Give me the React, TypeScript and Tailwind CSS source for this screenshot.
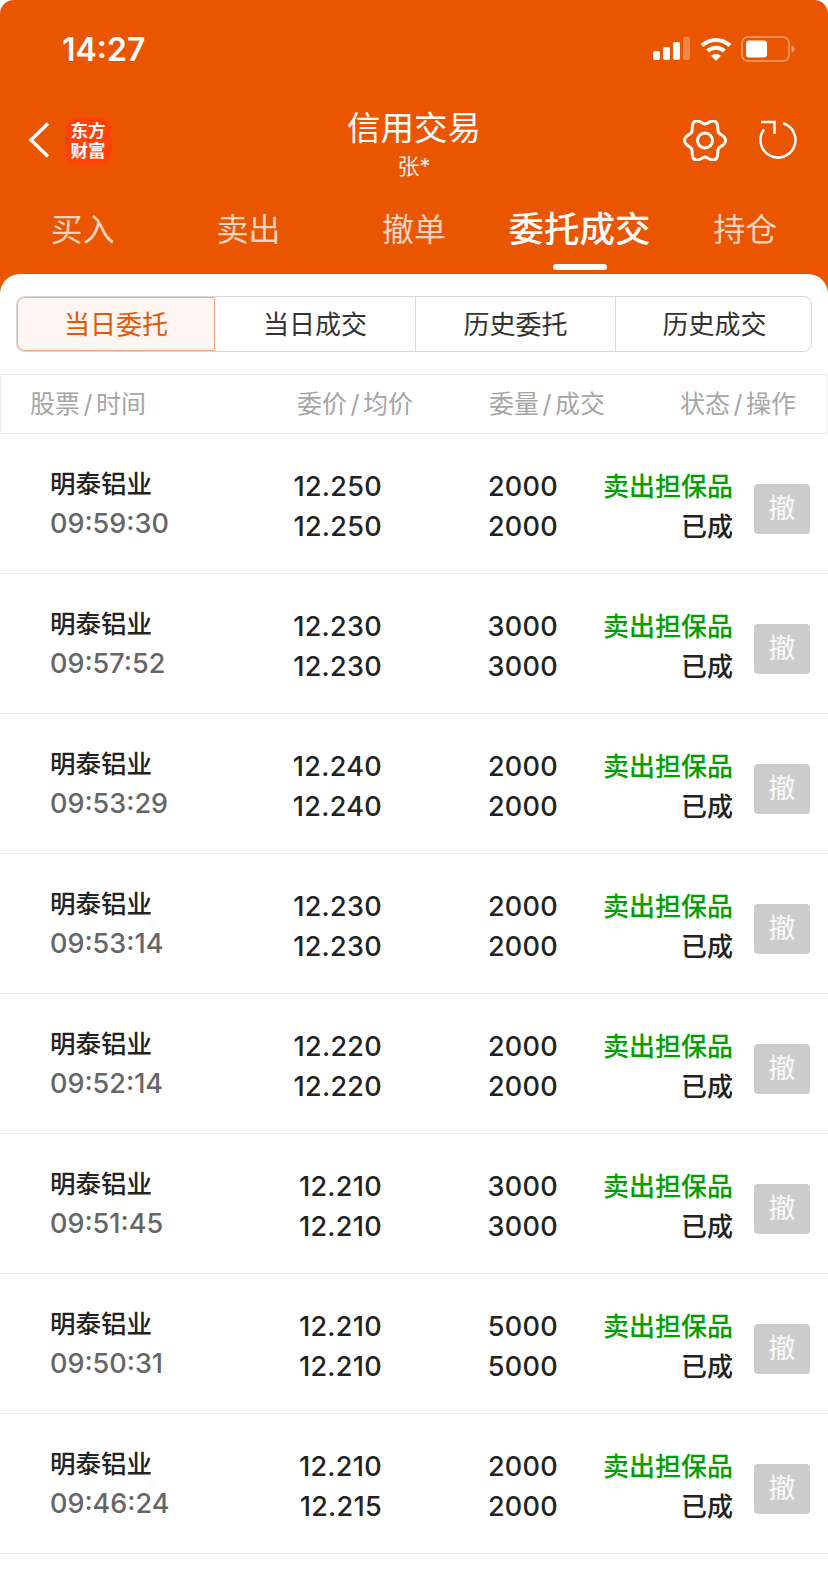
const tabs = ["买入", "卖出", "撤单", "委托成交", "持仓"]
const subTabs = [
  { label: "当日委托", cls: "w-[198px] rounded-l-[8px] border border-[#f5a67f] bg-[#fff5f1] text-[#eb5500]" },
  { label: "当日成交", cls: "w-[201px] border-r border-[#d9d9d9]" },
  { label: "历史委托", cls: "w-[200px] border-r border-[#d9d9d9]" },
  { label: "历史成交", cls: "flex-1 pl-[2px]" },
]
const headers = [
  { a: "股票", b: "时间", cls: "w-[296px] pl-[29px]" },
  { a: "委价", b: "均价", cls: "w-[192px]" },
  { a: "委量", b: "成交", cls: "w-[191px]" },
  { a: "状态", b: "操作", cls: "" },
]

const orders = [
  { time: "09:59:30", price: "12.250", avg: "12.250", qty: "2000" },
  { time: "09:57:52", price: "12.230", avg: "12.230", qty: "3000" },
  { time: "09:53:29", price: "12.240", avg: "12.240", qty: "2000" },
  { time: "09:53:14", price: "12.230", avg: "12.230", qty: "2000" },
  { time: "09:52:14", price: "12.220", avg: "12.220", qty: "2000" },
  { time: "09:51:45", price: "12.210", avg: "12.210", qty: "3000" },
  { time: "09:50:31", price: "12.210", avg: "12.210", qty: "5000" },
  { time: "09:46:24", price: "12.210", avg: "12.215", qty: "2000" },
]

const font = "font-['Inter','Noto_Sans_CJK_SC',sans-serif]"

// wavy six lobed outline of the settings gear
const gearPath = () => {
  const pts: string[] = []
  for (let i = 0; i < 120; i++) {
    const t = (i / 120) * Math.PI * 2
    const r = 18 + 2.5 * Math.cos(6 * t)
    pts.push(`${(22 + r * Math.cos(t)).toFixed(2)} ${(20.5 + 1.07 * r * Math.sin(t)).toFixed(2)}`)
  }
  return `M${pts.join("L")}Z`
}

const StatusIcons = () => (
  <div className="flex items-center">
    <svg width="37" height="24" viewBox="0 0 37 24">
      <rect x="0" y="14" width="7" height="9" rx="2" fill="#fff" />
      <rect x="10" y="10" width="7" height="13" rx="2" fill="#fff" />
      <rect x="20" y="5" width="7" height="18" rx="2" fill="#fff" />
      <rect x="30" y="0" width="7" height="23" rx="2" fill="#fff" fillOpacity="0.3" />
    </svg>
    <svg width="32" height="24" viewBox="0 0 32 24" fill="none" stroke="#fff" strokeWidth="4" className="ml-[10px]">
      <path d="M2 8.500C10 1 22 1 30 8.500" />
      <path d="M7.500 14C12.500 9.500 19.500 9.500 24.500 14" />
      <path d="M16 24l-5-5.200c3-2.400 7-2.400 10 0z" fill="#fff" stroke="none" />
    </svg>
    <svg width="54" height="26" viewBox="0 0 54 26" className="ml-[9px]">
      <rect x="1" y="1" width="47" height="24" rx="6" fill="none" stroke="#fff" strokeOpacity="0.45" strokeWidth="1.500" />
      <rect x="5" y="4.500" width="21" height="17" rx="3" fill="#fff" />
      <path d="M50.500 9.500c2 .6 3 2 3 3.500s-1 3-3 3.500z" fill="#fff" fillOpacity="0.45" />
    </svg>
  </div>
)

const Logo = () => (
  <div className="mt-[2px] flex h-[47px] w-[46px] flex-col items-center justify-center rounded-[9px] bg-[#ff4208] pb-[3px] font-['Noto_Sans_CJK_SC',sans-serif] text-[17.500px] leading-[20px] font-bold text-white">
    <span>东方</span>
    <span>财富</span>
  </div>
)

const App = () => {
  return (
    <div className={`${font} h-[1587px] w-[828px] overflow-hidden bg-white`}>
      <header className="h-[300px] rounded-t-[14px] bg-[#ea5500] text-white">
        <div className="flex h-[98px] items-center justify-between pr-[33px] pl-[62px]">
          <span className="pt-[2px] text-[32px] font-semibold">14:27</span>
          <StatusIcons />
        </div>
        <div className="relative flex h-[84px] items-center pr-[30px] pl-[27px]">
          <svg width="24" height="38" viewBox="0 0 24 38" fill="none" stroke="#fff" strokeWidth="3.500" className="mr-[14px]">
            <path d="M21 2.500L4 19l17 16.500" />
          </svg>
          <Logo />
          <div className="absolute inset-x-0 top-[5px] flex flex-col items-center">
            <span className="text-[33.500px] leading-[50px]">信用交易</span>
            <span className="text-[22px] leading-[27px] text-white/90">张*</span>
          </div>
          <svg width="44" height="41" viewBox="0 0 44 41" fill="none" stroke="#fff" strokeWidth="3" strokeLinejoin="round" className="mr-[31px] ml-auto">
            <path d={gearPath()} />
            <circle cx="22" cy="20.500" r="7.500" />
          </svg>
          <svg width="40" height="40" viewBox="0 0 40 40" fill="none" stroke="#fff" strokeWidth="2.500">
            <path d="M25 3.300A17.500 17.500 0 1 1 6 9.500" />
            <path d="M3 2h13.500v12" />
          </svg>
        </div>
        <nav className="mt-[20px] flex h-[56px] items-center">
          {tabs.map((t, i) => (
            <div key={t} className={`relative flex h-full flex-1 items-center justify-center ${i === 3 ? "text-[35.500px] font-medium text-white" : "text-[32px] text-white/75"}`}>
              {t}
              {i === 3 && <span className="absolute top-[62px] left-1/2 h-[6px] w-[54px] -translate-x-1/2 rounded-full bg-white" />}
            </div>
          ))}
        </nav>
      </header>
      <main className="relative -mt-[26px] rounded-t-[20px] bg-white pt-[22px]">
        <div className="mx-4 flex h-[56px] overflow-hidden rounded-[8px] border border-[#d9d9d9] text-[26px] text-[#333]">
          {subTabs.map((t) => (
            <div key={t.label} className={`flex items-center justify-center ${t.cls}`}>
              {t.label}
            </div>
          ))}
        </div>
        <div className="mt-[22px] flex h-[60px] items-center border border-[#eeeeee] text-[25px] text-[#a6a6a6]">
          {headers.map((h) => (
            <span key={h.a} className={`pt-[2px] ${h.cls}`}>
              {h.a}
              <span className="mx-[3.500px]">/</span>
              {h.b}
            </span>
          ))}
        </div>
        {orders.map((o) => (
          <div key={o.time} className="flex h-[140px] items-start border-b border-[#eeeeee] pt-[33px] pl-[50px] text-[27px] leading-[40px] font-medium tracking-[0.3px] text-[#222]">
            <div className="w-[232px]">
              <div className="-mt-[3px] text-[25.500px] tracking-normal">明泰铝业</div>
              <div className="tracking-normal text-[#666]">{o.time}</div>
            </div>
            <div className="w-[100px] text-right">
              <div>{o.price}</div>
              <div>{o.avg}</div>
            </div>
            <div className="w-[176px] text-right">
              <div>{o.qty}</div>
              <div>{o.qty}</div>
            </div>
            <div className="w-[175px] text-right text-[26px] tracking-normal">
              <div className="text-[#00a000]">卖出担保品</div>
              <div>已成</div>
            </div>
            <div className="mt-[17px] ml-[21px] flex h-[50px] w-[56px] items-center justify-center rounded-[4px] bg-[#cccccc] text-[27px] font-normal tracking-normal text-white/90">撤</div>
          </div>
        ))}
      </main>
    </div>
  )
}

export default App
